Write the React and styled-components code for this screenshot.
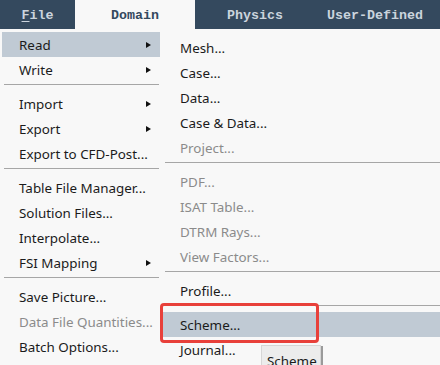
import React from "react";
import styled, { createGlobalStyle } from "styled-components";

const GlobalStyle = createGlobalStyle`
  html, body {
    margin: 0;
    padding: 0;
    background: #f8f8f8;
    overflow: hidden;
  }
  body {
    font-family: "Noto Sans", "Open Sans", sans-serif;
  }
`;

const Root = styled.div`
  position: relative;
  width: 440px;
  height: 365px;
  overflow: hidden;
  background: #f8f8f8;
`;

const TabBar = styled.div`
  display: flex;
  height: 29px;
  background: #34495e;
`;

const Tab = styled.div`
  width: ${(p) => p.width}px;
  flex-shrink: 0;
  display: flex;
  align-items: center;
  justify-content: center;
  padding-top: 1px;
  font-family: "Liberation Mono", "DejaVu Sans Mono", monospace;
  font-weight: bold;
  font-size: 13.3px;
  color: ${(p) => (p.active ? "#34495e" : "#cbd4dd")};
  background: ${(p) => (p.active ? "#f8f8f8" : "transparent")};

  u {
    text-decoration: underline;
    text-underline-offset: 2px;
  }
`;

const Body = styled.div`
  display: flex;
`;

const Menu = styled.div`
  width: 158px;
  flex-shrink: 0;
  padding: 3px 0 0 2px;
`;

const SubMenu = styled.div`
  flex: 1;
  padding-top: 6px;
`;

const Item = styled.div`
  display: flex;
  align-items: center;
  justify-content: space-between;
  height: 25px;
  padding: 0 9px 0 ${(p) => p.indent}px;
  font-size: 13.4px;
  color: ${(p) => (p.disabled ? "#8b8b8b" : "#1b1b1b")};
  background: ${(p) => (p.selected ? "#c0cad4" : "transparent")};
  white-space: nowrap;
`;

const Arrow = styled.span`
  width: 0;
  height: 0;
  border-top: 3.5px solid transparent;
  border-bottom: 3.5px solid transparent;
  border-left: 5px solid #111;
`;

const Separator = styled.div`
  height: 1px;
  margin: 2px ${(p) => p.right}px 6px ${(p) => p.left}px;
  background: #a6a6a6;
`;

const Annotation = styled.div`
  position: absolute;
  left: 160px;
  top: 303px;
  width: 153px;
  height: 34px;
  border: 3px solid #e8403a;
  border-radius: 4px;
`;

const Tooltip = styled.div`
  position: absolute;
  left: 261px;
  top: 345px;
  width: 60px;
  height: 30px;
  padding: 6px 0 0 5px;
  box-sizing: border-box;
  background: #ececec;
  border: 1px solid #d6d6d6;
  box-shadow: 2px 1px 0 #9a9a9a;
  font-size: 13.4px;
  color: #1b1b1b;
  white-space: nowrap;
`;

const mainItems = [
  { label: "Read", arrow: true, selected: true },
  { label: "Write", arrow: true },
  "sep",
  { label: "Import", arrow: true },
  { label: "Export", arrow: true },
  { label: "Export to CFD-Post..." },
  "sep",
  { label: "Table File Manager..." },
  { label: "Solution Files..." },
  { label: "Interpolate..." },
  { label: "FSI Mapping", arrow: true },
  "sep",
  { label: "Save Picture..." },
  { label: "Data File Quantities...", disabled: true },
  { label: "Batch Options..." },
];

const readItems = [
  { label: "Mesh..." },
  { label: "Case..." },
  { label: "Data..." },
  { label: "Case & Data..." },
  { label: "Project...", disabled: true },
  "sep",
  { label: "PDF...", disabled: true },
  { label: "ISAT Table...", disabled: true },
  { label: "DTRM Rays...", disabled: true },
  { label: "View Factors...", disabled: true },
  "sep",
  { label: "Profile..." },
  "sep",
  { label: "Scheme...", selected: true },
  { label: "Journal..." },
];

const tabs = [
  { label: "File", width: 75, mnemonic: true },
  { label: "Domain", width: 120, active: true },
  { label: "Physics", width: 120 },
  { label: "User-Defined", width: 120 },
];

const renderItems = (items, indent, sepLeft, sepRight) =>
  items.map((it, i) =>
    it === "sep" ? (
      <Separator key={i} left={sepLeft} right={sepRight} />
    ) : (
      <Item
        key={i}
        indent={indent}
        selected={it.selected}
        disabled={it.disabled}
      >
        <span>{it.label}</span>
        {it.arrow && <Arrow />}
      </Item>
    )
  );

export default function App() {
  return (
    <Root>
      <GlobalStyle />
      <TabBar>
        {tabs.map((t) => (
          <Tab key={t.label} width={t.width} active={t.active}>
            {t.mnemonic ? (
              <span>
                <u>{t.label[0]}</u>
                {t.label.slice(1)}
              </span>
            ) : (
              t.label
            )}
          </Tab>
        ))}
      </TabBar>
      <Body>
        <Menu>{renderItems(mainItems, 17, 2, 1)}</Menu>
        <SubMenu>{renderItems(readItems, 20, 5, 0)}</SubMenu>
      </Body>
      <Annotation />
      <Tooltip>Scheme</Tooltip>
    </Root>
  );
}
